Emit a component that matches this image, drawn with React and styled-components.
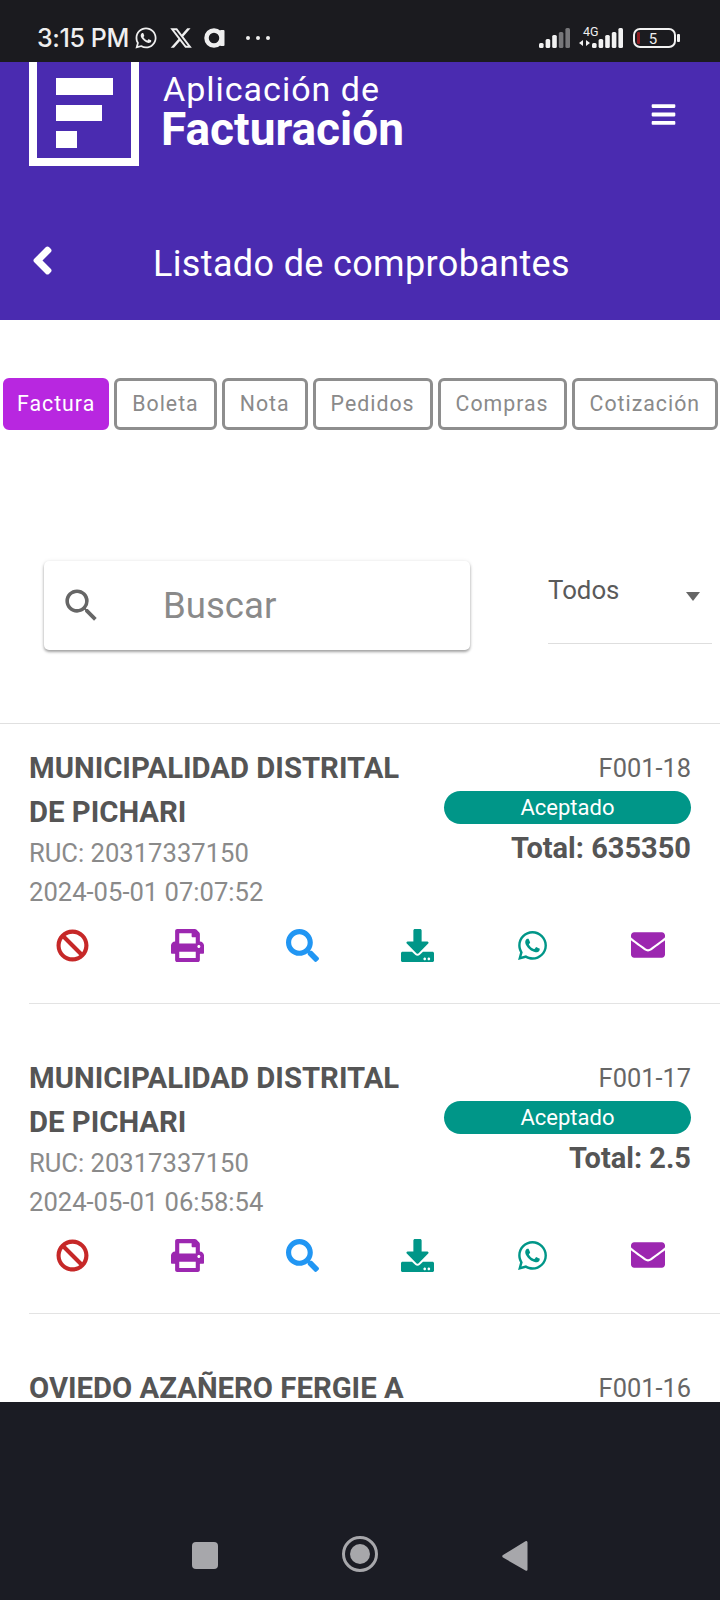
import React from 'react';
import styled, { createGlobalStyle } from 'styled-components';
import { FaAngleLeft, FaBan, FaBars, FaDownload, FaEnvelope, FaPrint, FaSearch, FaWhatsapp } from 'react-icons/fa';
import { FaXTwitter } from 'react-icons/fa6';
import { MdSearch } from 'react-icons/md';

const GlobalStyle = createGlobalStyle`
    html, body {
        margin: 0;
        padding: 0;
        background: #fff;
    }
    * {
        box-sizing: border-box;
    }
    body {
        font-family: Roboto, "Liberation Sans", sans-serif;
    }
`

const Screen = styled.div`
    width: 720px;
    height: 1600px;
    display: flex;
    flex-direction: column;
    overflow: hidden;
`

const StatusBar = styled.div`
    height: 62px;
    flex: none;
    background: #1b1b1f;
    color: #efefef;
    display: flex;
    align-items: center;
    padding: 14px 0 0 37px;
`

const Clock = styled.span`
    font-family: Inter, Roboto, sans-serif;
    font-size: 25px;
    font-weight: 500;
    letter-spacing: -0.4px;
    width: 97px;
`

const StatusApps = styled.div`
    display: flex;
    align-items: center;
    gap: 11px;
    font-size: 24px;
`

const Dots = styled.div`
    display: flex;
    gap: 6px;
    margin-left: 20px;
`

const Dot = styled.i`
    width: 4px;
    height: 4px;
    border-radius: 50%;
    background: #efefef;
`

const StatusRight = styled.div`
    margin-left: auto;
    margin-right: 40px;
    display: flex;
`

const Body = styled.div`
    flex: 1;
    min-height: 0;
    overflow: hidden;
    background: #fff;
`

const Header = styled.header`
    height: 258px;
    background: #4a2bb0;
    color: #fff;
`

const Brand = styled.div`
    height: 104px;
    display: flex;
    align-items: center;
    padding-left: 29px;
    padding-right: 43px;
`

const Logo = styled.div`
    width: 110px;
    height: 104px;
    border: 8px solid #fff;
    border-top: none;
    padding: 16px 0 0 19px;
    display: flex;
    flex-direction: column;
    gap: 10px;
    flex: none;
`

const LogoBar = styled.div`
    height: ${p => p.$h}px;
    width: ${p => p.$w}px;
    background: #fff;
`

const BrandText = styled.div`
    margin-left: 22px;
    display: flex;
    flex-direction: column;
    margin-top: -9px;
`

const BrandTop = styled.span`
    font-size: 34px;
    line-height: 38px;
    letter-spacing: 1px;
    padding-left: 2px;
`

const BrandBottom = styled.span`
    font-size: 46px;
    font-weight: 700;
    line-height: 42px;
`

const Menu = styled.div`
    margin-left: auto;
    font-size: 27px;
    display: flex;
`

const TitleRow = styled.div`
    display: flex;
    align-items: center;
    padding: 73px 0 0 20px;
`

const Back = styled.div`
    font-size: 45px;
    display: flex;
    width: 133px;
    margin-top: -8px;
`

const Title = styled.h1`
    margin: 0;
    font-size: 36px;
    font-weight: 400;
    letter-spacing: 0.35px;
    line-height: 50px;
`

const Tabs = styled.div`
    display: flex;
    gap: 5px;
    padding: 58px 0 0 3px;
`

const Tab = styled.div`
    height: 52px;
    padding: 0 ${p => (p.$active ? 11 : 15)}px 2px;
    border-radius: 6px;
    border: 3px solid ${p => (p.$active ? '#b827e0' : '#8e8e8e')};
    background: ${p => (p.$active ? '#b827e0' : '#fff')};
    color: ${p => (p.$active ? '#fff' : '#8a8a8a')};
    font-size: 21.3px;
    letter-spacing: 1px;
    display: flex;
    align-items: center;
`

const Filters = styled.div`
    display: flex;
    padding: 131px 8px 0 44px;
    align-items: flex-start;
`

const SearchBox = styled.div`
    width: 426px;
    height: 89px;
    border-radius: 5px;
    background: #fff;
    box-shadow: 0 2px 3px rgba(0, 0, 0, 0.35), 0 0 4px rgba(0, 0, 0, 0.08);
    display: flex;
    align-items: center;
    padding-left: 16px;
    color: #666;
    font-size: 43px;
`

const SearchText = styled.span`
    margin-left: 60px;
    color: #8a8a8a;
    font-size: 36.6px;
`

const Select = styled.div`
    width: 164px;
    height: 83px;
    margin-left: 78px;
    border-bottom: 1px solid #dedede;
    display: flex;
    justify-content: space-between;
    padding-top: 14px;
    color: #5a5a5a;
    font-size: 25.8px;
    line-height: 30px;
`

const Caret = styled.i`
    width: 0;
    height: 0;
    margin: 17px 12px 0 0;
    border-left: 7px solid transparent;
    border-right: 7px solid transparent;
    border-top: 9px solid #666;
`

const List = styled.div`
    margin-top: 73px;
    border-top: 1px solid #e0e0e0;
`

const Card = styled.article`
    margin: 0 0 30px 29px;
    height: 280px;
    padding: 22px 29px 0 0;
    border-bottom: 1px solid #e3e3e3;
`

const CardTop = styled.div`
    display: flex;
    justify-content: space-between;
    height: 163px;
`

const CardLeft = styled.div`
    width: 400px;
`

const Name = styled.div`
    font-size: 29.3px;
    font-weight: 700;
    line-height: 44px;
    color: #555;
`

const Meta = styled.div`
    font-size: 25.6px;
    line-height: 39px;
    color: #8a8a8a;
`

const CardRight = styled.div`
    width: 247px;
    display: flex;
    flex-direction: column;
    align-items: flex-end;
`

const Serie = styled.div`
    font-size: 25.4px;
    line-height: 44px;
    color: #666;
`

const Status = styled.div`
    width: 100%;
    height: 33px;
    margin-top: 1px;
    border-radius: 17px;
    background: #009688;
    color: #fff;
    font-size: 22px;
    display: flex;
    align-items: center;
    justify-content: center;
`

const Total = styled.div`
    font-size: 29px;
    font-weight: 700;
    line-height: 46px;
    margin-top: 1px;
    color: #555;
`

const Actions = styled.div`
    display: grid;
    grid-template-columns: repeat(6, 115px);
    margin-left: -14px;
    margin-top: 19px;
`

const Action = styled.div`
    display: flex;
    justify-content: center;
    align-items: center;
    height: 34px;
    font-size: ${p => p.$size || 33}px;
    color: ${p => p.$color};
`

const NavBar = styled.nav`
    height: 198px;
    flex: none;
    background: #1b1c24;
    display: flex;
    justify-content: center;
    align-items: flex-end;
    gap: 124px;
    padding: 0 0 26px 0;
`

const NavSquare = styled.div`
    width: 26px;
    height: 27px;
    border-radius: 4px;
    background: #a7a7ab;
    margin-bottom: 5px;
`

const NavCircle = styled.div`
    width: 36px;
    height: 36px;
    border-radius: 50%;
    border: 3px solid #a7a7ab;
    display: flex;
    align-items: center;
    justify-content: center;
    margin-bottom: 2px;

    &::after {
        content: '';
        width: 20px;
        height: 20px;
        border-radius: 50%;
        background: #a7a7ab;
    }
`

const BackTriangle = styled.svg`
    margin-bottom: 2px;
`

const Signal = ({ x, dim = 0 }) => (
    <g transform={`translate(${x} 0)`}>
        {[5, 9, 13, 16, 20].map((h, i) => (
            <rect
                key={i}
                x={i * 6.6}
                y={25 - h}
                width={4.6}
                height={h}
                rx={1.5}
                fill={i >= 5 - dim ? '#77777a' : '#f2f2f2'}
            />
        ))}
    </g>
)

const StatusIcons = () => (
    <svg width="145" height="30" viewBox="0 0 145 30">
        <Signal x={4} dim={2} />
        <text x="48" y="13" fill="#efefef" fontSize="12.5" fontFamily="Roboto, sans-serif">4G</text>
        <path d="M44 20l4-3v6zM55 20l-4-3v6z" fill="#f2f2f2" />
        <Signal x={57} />
        <rect x="99" y="6" width="41" height="18" rx="6" fill="none" stroke="#f2f2f2" strokeWidth="2" />
        <rect x="102" y="9" width="3" height="12" rx="1" fill="#8f1c20" />
        <rect x="142" y="11" width="3" height="8" rx="1" fill="#f2f2f2" />
        <text x="118" y="21" fill="#efefef" fontSize="15" textAnchor="middle" fontFamily="Roboto, sans-serif">5</text>
    </svg>
)

const AmazonMark = () => (
    <svg width="22" height="20" viewBox="0 0 22 20">
        <circle cx="10" cy="10" r="7.500" fill="none" stroke="#efefef" strokeWidth="4.500" />
        <rect x="16" y="2" width="4.500" height="16" rx="1" fill="#efefef" />
    </svg>
)

const rows = [
    { name: ['MUNICIPALIDAD DISTRITAL', 'DE PICHARI'], ruc: '20317337150', date: '2024-05-01 07:07:52', serie: 'F001-18', total: '635350' },
    { name: ['MUNICIPALIDAD DISTRITAL', 'DE PICHARI'], ruc: '20317337150', date: '2024-05-01 06:58:54', serie: 'F001-17', total: '2.5' },
    { name: ['OVIEDO AZAÑERO FERGIE A'], ruc: '', date: '', serie: 'F001-16', total: '' },
]

const tabs = ['Factura', 'Boleta', 'Nota', 'Pedidos', 'Compras', 'Cotización']

export default function App() {
    return (
        <Screen>
            <GlobalStyle />
            <StatusBar>
                <Clock>3:15 PM</Clock>
                <StatusApps>
                    <FaWhatsapp />
                    <FaXTwitter />
                    <AmazonMark />
                </StatusApps>
                <Dots><Dot /><Dot /><Dot /></Dots>
                <StatusRight><StatusIcons /></StatusRight>
            </StatusBar>
            <Body>
                <Header>
                    <Brand>
                        <Logo>
                            <LogoBar $w={57} $h={17} />
                            <LogoBar $w={46} $h={16} />
                            <LogoBar $w={21} $h={17} />
                        </Logo>
                        <BrandText>
                            <BrandTop>Aplicación de</BrandTop>
                            <BrandBottom>Facturación</BrandBottom>
                        </BrandText>
                        <Menu><FaBars /></Menu>
                    </Brand>
                    <TitleRow>
                        <Back><FaAngleLeft /></Back>
                        <Title>Listado de comprobantes</Title>
                    </TitleRow>
                </Header>
                <Tabs>
                    {tabs.map((t, i) => <Tab key={t} $active={i === 0}>{t}</Tab>)}
                </Tabs>
                <Filters>
                    <SearchBox>
                        <MdSearch />
                        <SearchText>Buscar</SearchText>
                    </SearchBox>
                    <Select>
                        Todos
                        <Caret />
                    </Select>
                </Filters>
                <List>
                    {rows.map(r => (
                        <Card key={r.serie}>
                            <CardTop>
                                <CardLeft>
                                    {r.name.map(n => <Name key={n}>{n}</Name>)}
                                    {r.ruc && <Meta>RUC: {r.ruc}</Meta>}
                                    {r.date && <Meta>{r.date}</Meta>}
                                </CardLeft>
                                <CardRight>
                                    <Serie>{r.serie}</Serie>
                                    {r.total && <Status>Aceptado</Status>}
                                    {r.total && <Total>Total: {r.total}</Total>}
                                </CardRight>
                            </CardTop>
                            <Actions>
                                <Action $color="#c62828"><FaBan /></Action>
                                <Action $color="#9c27b0"><FaPrint /></Action>
                                <Action $color="#2196f3"><FaSearch /></Action>
                                <Action $color="#009688"><FaDownload /></Action>
                                <Action $color="#009688"><FaWhatsapp /></Action>
                                <Action $color="#9c27b0" $size={34}><FaEnvelope /></Action>
                            </Actions>
                        </Card>
                    ))}
                </List>
            </Body>
            <NavBar>
                <NavSquare />
                <NavCircle />
                <BackTriangle width="26" height="32" viewBox="0 0 26 32">
                    <path d="M24 1c1 0 1.500.7 1.500 1.500v27c0 1-.9 1.800-2 1L1 17.500c-1-.8-1-1.700 0-2.500L23 1.500c.4-.3.700-.5 1-.5z" fill="#a7a7ab" />
                </BackTriangle>
            </NavBar>
        </Screen>
    )
}
